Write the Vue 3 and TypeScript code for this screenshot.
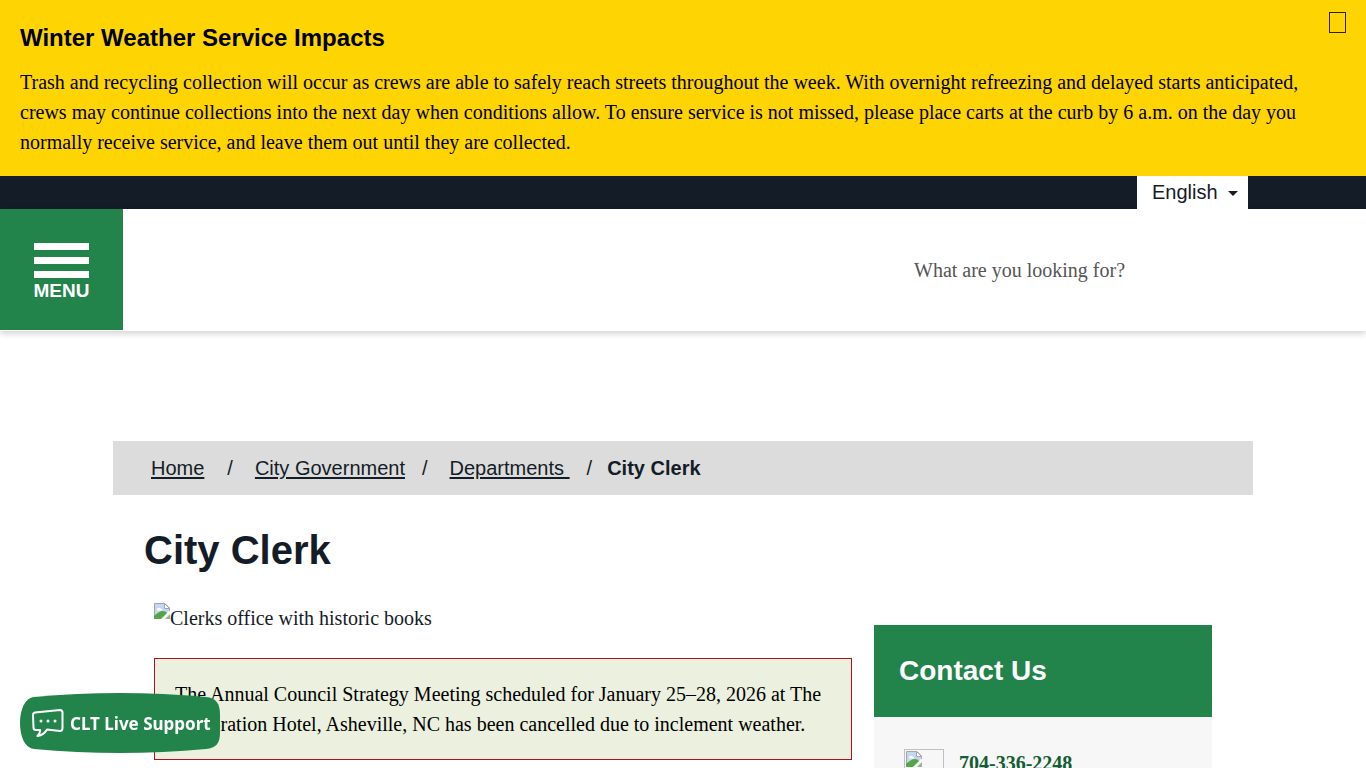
<script setup lang="ts">
import { ref } from 'vue'

interface Crumb {
  label: string
  href: string
}

const bannerOpen = ref(true)
const language = ref('English')
const query = ref('')
const crumbs: Crumb[] = [
  { label: 'Home', href: '#home' },
  { label: 'City Government', href: '#government' },
  { label: 'Departments\u00a0', href: '#departments' },
]
</script>

<template>
  <div class="page">
    <section v-if="bannerOpen" class="banner">
      <h2>Winter Weather Service Impacts</h2>
      <p>
        Trash and recycling collection will occur as crews are able to safely reach streets
        throughout the week. With overnight refreezing and delayed starts anticipated, crews may
        continue collections into the next day when conditions allow. To ensure service is not
        missed, please place carts at the curb by 6 a.m. on the day you normally receive service,
        and leave them out until they are collected.
      </p>
      <button class="close" type="button" aria-label="Close alert" @click="bannerOpen = false">
        <span class="box"></span>
      </button>
    </section>

    <div class="topbar">
      <div class="language">
        <select v-model="language" aria-label="Language">
          <option>English</option>
          <option>Español</option>
        </select>
        <svg class="caret" viewBox="0 0 10 5" aria-hidden="true"><path d="M0 0H10L5 5Z" /></svg>
      </div>
    </div>

    <header class="header">
      <button class="menu" type="button">
        <span class="bars"><i></i><i></i><i></i></span>
        MENU
      </button>
      <input
        v-model="query"
        class="search"
        type="search"
        aria-label="Search"
        placeholder="What are you looking for?"
      />
    </header>

    <div class="container">
      <nav class="crumbs" aria-label="Breadcrumb">
        <ol>
          <li v-for="crumb in crumbs" :key="crumb.href">
            <a :href="crumb.href">{{ crumb.label }}</a>
            <span class="slash">/</span>
          </li>
          <li class="current" aria-current="page">City Clerk</li>
        </ol>
      </nav>

      <h1>City Clerk</h1>

      <div class="columns">
        <main>
          <div class="photo">
            <svg class="broken" viewBox="0 0 16 16" aria-hidden="true">
              <path d="M.5 15V.5H11L15.500 5V9" fill="#fff" stroke="#a3a6aa" />
              <path d="M1 1H10.500V5.500H15V8L8 15H1Z" fill="#c5d6f5" />
              <path d="M3 6.500a2 2 0 0 1 3.500-1A1.500 1.500 0 0 1 8 7.500H3Z" fill="#fff" />
              <path d="M0 16V13C3 10 6 8 9 8Q12 8 13 10L7 16Z" fill="#55a449" />
              <path d="M10.500.5V5.500H15.500Z" fill="#fff" stroke="#a3a6aa" />
              <path d="M16 7.500V10L10.500 16H7.500Z" fill="#fff" />
              <path d="M16 11V16H11Z" fill="#8fb98a" />
            </svg>
            <span>Clerks office with historic books</span>
          </div>
          <p class="notice">
            The Annual Council Strategy Meeting scheduled for January 25–28, 2026 at The
            Restoration Hotel, Asheville, NC has been cancelled due to inclement weather.
          </p>
        </main>
        <aside class="contact">
          <h2>Contact Us</h2>
          <div class="phone">
            <span class="frame">
              <svg class="broken" viewBox="0 0 16 16" aria-hidden="true">
                <path d="M.5 15V.5H11L15.500 5V9" fill="#fff" stroke="#a3a6aa" />
                <path d="M1 1H10.500V5.500H15V8L8 15H1Z" fill="#c5d6f5" />
                <path d="M3 6.500a2 2 0 0 1 3.500-1A1.500 1.500 0 0 1 8 7.500H3Z" fill="#fff" />
                <path d="M0 16V13C3 10 6 8 9 8Q12 8 13 10L7 16Z" fill="#55a449" />
                <path d="M10.500.5V5.500H15.500Z" fill="#fff" stroke="#a3a6aa" />
                <path d="M16 7.500V10L10.500 16H7.500Z" fill="#f7f7f7" />
                <path d="M16 11V16H11Z" fill="#8fb98a" />
              </svg>
            </span>
            <a href="tel:704-336-2248">704-336-2248</a>
          </div>
        </aside>
      </div>
    </div>

    <button class="support" type="button">
      <svg class="blob" viewBox="0 0 200 60" preserveAspectRatio="none" aria-hidden="true">
        <path
          d="M14 4Q100 -4 186 4C196 5 200 10 200 22V40C200 50 196 55 186 56Q100 64 14 56C5 55 0 44 0 30C0 16 5 5 14 4Z"
        />
      </svg>
      <svg class="chat" viewBox="0 0 32 28" aria-hidden="true">
        <path
          d="M3 3.500L28 1Q30.500 1 30.500 3.500V19Q30.500 22 28 22L15 20.500Q12 26 5.500 27Q8.500 24 8 21H4Q1.500 21 1.500 18.500L1 6Q1 4 3 3.500Z"
        />
        <g>
          <circle cx="9" cy="12" r="1.500" />
          <circle cx="16" cy="12" r="1.500" />
          <circle cx="23" cy="12" r="1.500" />
        </g>
      </svg>
      <span>CLT Live Support</span>
    </button>
  </div>
</template>

<style>
body {
  margin: 0;
  background: #fff;
}
</style>

<style scoped>
.page {
  color: #141c27;
  font: 20px/30px 'Liberation Serif', 'Times New Roman', serif;
}
h1,
h2,
p,
ol {
  margin: 0;
}
button,
select,
input {
  border: 0;
  border-radius: 0;
  cursor: pointer;
}
h1,
h2,
.menu,
.crumbs,
.language select {
  font-family: 'Liberation Sans', Arial, sans-serif;
}
.banner {
  position: relative;
  padding: 20px 60px 19px 20px;
  background: #ffd403;
  color: #000;
}
.banner h2 {
  margin-bottom: 11px;
  font-size: 24px;
  line-height: 36px;
}
.close {
  position: absolute;
  top: 12px;
  right: 20px;
  display: flex;
  padding: 0;
  background: none;
}
.box {
  width: 15px;
  height: 19px;
  border: 1px solid #2a2000;
}
.topbar {
  display: flex;
  justify-content: flex-end;
  padding-right: 118px;
  background: #141c27;
}
.language {
  position: relative;
  display: flex;
  background: #fff;
}
.language select {
  width: 111px;
  height: 33px;
  padding: 0 28px 2px 15px;
  appearance: none;
  background: none;
  color: #141c27;
  font-size: 20px;
}
.caret {
  position: absolute;
  top: 15px;
  right: 10px;
  width: 10px;
  height: 5px;
  fill: #141c27;
  pointer-events: none;
}
.header {
  display: flex;
  justify-content: space-between;
  align-items: center;
  padding: 0 138px 1px 0;
  box-shadow: 0 3px 6px rgba(0, 0, 0, 0.16);
}
.menu {
  display: flex;
  flex-direction: column;
  justify-content: center;
  align-items: center;
  width: 123px;
  height: 121px;
  padding: 8px 0 0;
  background: #22844b;
  color: #fff;
  font-size: 19px;
  font-weight: 700;
  line-height: 26px;
}
.bars {
  display: grid;
  gap: 7px;
  width: 55px;
}
.bars i {
  height: 7px;
  background: #fff;
}
.search {
  width: 314px;
  height: 40px;
  padding: 2px 0 0;
  outline: 0;
  background: none;
  font-family: inherit;
  font-size: 20px;
}
.search::placeholder {
  color: #555;
}
.container {
  max-width: 1140px;
  margin: 110px auto 0;
}
.crumbs {
  padding: 12px 38px;
  background: #dcdcdc;
}
.crumbs ol {
  display: flex;
  padding: 0;
  list-style: none;
}
.crumbs li {
  display: flex;
}
.crumbs a {
  color: inherit;
  text-underline-offset: 2px;
}
.slash {
  margin: 0 22px 0 17px;
}
.crumbs li:first-child .slash {
  margin-left: 23px;
}
.crumbs li:nth-child(3) .slash {
  margin-right: 15px;
}
.current {
  font-weight: 700;
}
h1 {
  margin: 25px 31px 0;
  font-size: 40px;
  line-height: 60px;
}
.columns {
  display: grid;
  grid-template-columns: minmax(0, 1fr) 338px;
  gap: 22px;
  align-items: start;
  padding: 0 41px;
}
.photo {
  display: flex;
  align-items: flex-start;
  margin-top: 23px;
}
.broken {
  width: 16px;
  height: 16px;
}
.notice {
  margin-top: 25px;
  padding: 20px;
  border: 1px solid #b01217;
  background: #ebf1de;
  color: #000;
}
.contact {
  margin-top: 45px;
  background: #f7f7f7;
}
.contact h2 {
  padding: 25px;
  background: #22844b;
  color: #fff;
  font-size: 28px;
  line-height: 42px;
}
.phone {
  display: flex;
  align-items: flex-start;
  gap: 15px;
  padding: 32px 30px;
}
.frame {
  box-sizing: border-box;
  display: flex;
  width: 40px;
  height: 40px;
  padding: 1px;
  border: 1px solid #c0c0c0;
}
.phone a {
  color: #145c33;
  font-weight: 700;
  line-height: 28px;
}
.support {
  position: fixed;
  bottom: 15px;
  left: 20px;
  z-index: 1;
  display: flex;
  align-items: center;
  gap: 6px;
  width: 200px;
  height: 60px;
  padding: 0 0 0 12px;
  background: none;
  color: #fff;
  font: 700 17px 'Noto Sans', 'Open Sans', sans-serif;
  white-space: nowrap;
}
.blob {
  position: absolute;
  inset: 0;
  z-index: -1;
  width: 100%;
  height: 100%;
  fill: #22844b;
}
.chat {
  width: 32px;
  height: 28px;
  fill: none;
  stroke: #fff;
  stroke-width: 2;
  stroke-linejoin: round;
}
.chat g {
  fill: #fff;
  stroke: none;
}
</style>
